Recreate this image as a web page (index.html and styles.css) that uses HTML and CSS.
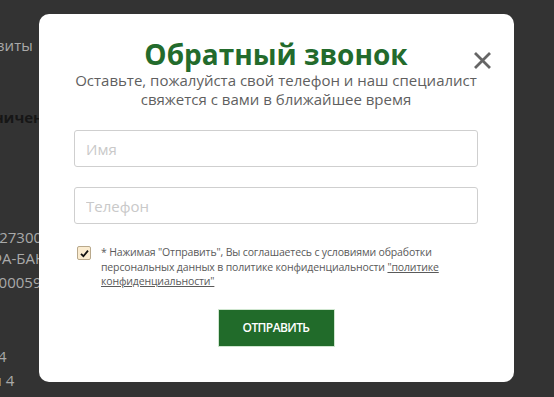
FILE: index.html
```html
<!DOCTYPE html>
<html lang="ru">
<head>
<meta charset="utf-8">
<link rel="stylesheet" href="styles.css">
</head>
<body>
<div class="page">
  <div class="bg-line l1">Реквизиты</div>
  <div class="bg-line l2 bold">Ограничен</div>
  <div class="bg-line l3">4027300</div>
  <div class="bg-line l4">ЛЬФА-БАНК</div>
  <div class="bg-line l5">2000593</div>
  <div class="bg-line l6">4</div>
  <div class="bg-line l7">ı 4</div>
</div>
<div class="overlay">
  <div class="modal">
    <button class="close" aria-label="Закрыть">
      <svg width="19" height="19" viewBox="0 0 19 19"><path d="M2 2 L17 17 M17 2 L2 17" stroke="#666" stroke-width="2.8" stroke-linecap="butt" fill="none"/></svg>
    </button>
    <h1 class="title">Обратный звонок</h1>
    <p class="subtitle">Оставьте, пожалуйста свой телефон и наш специалист<br>свяжется с вами в ближайшее время</p>
    <input class="field" type="text" placeholder="Имя">
    <input class="field" type="text" placeholder="Телефон">
    <div class="agree">
      <span class="check"><svg width="11" height="11" viewBox="0 0 11 11"><path d="M2 5.8 L4.4 8.2 L9 2.6" stroke="#111" stroke-width="1.8" fill="none"/></svg></span>
      <p class="agree-text">* Нажимая "Отправить", Вы соглашаетесь с условиями обработки персональных данных в политике конфиденциальности <a href="#">"политике конфиденциальности"</a></p>
    </div>
    <div class="actions"><button class="submit">ОТПРАВИТЬ</button></div>
  </div>
</div>
</body>
</html>
```
FILE: styles.css
```css
* { box-sizing: border-box; }
html, body { margin: 0; padding: 0; }
body {
  width: 554px;
  height: 397px;
  overflow: hidden;
  background: #333333;
  font-family: "Open Sans", "Noto Sans", sans-serif;
}
.page {
  padding-top: 34px;
  display: flex;
  flex-direction: column;
  color: #a9a9a9;
  font-size: 15px;
  line-height: 23px;
}
.bg-line { white-space: nowrap; }
.bold { font-weight: 700; color: #161616; }
.l1 { margin-left: -46px; }
.l2 { margin-left: -44px; margin-top: 49px; }
.l3 { margin-left: -18px; margin-top: 97px; }
.l4 { margin-left: -30px; margin-top: -2px; }
.l5 { margin-left: -10px; margin-top: 1px; }
.l6 { margin-left: -2px; margin-top: 51px; }
.l7 { margin-left: -2px; margin-top: 1px; }

.overlay {
  position: fixed;
  inset: 0;
}
.modal {
  position: absolute;
  left: 39px;
  top: 14px;
  width: 475px;
  height: 368px;
  background: #fff;
  border-radius: 10px;
  padding: 23px 36px 0 35px;
  display: flex;
  flex-direction: column;
}
.close {
  position: absolute;
  top: 37px;
  right: 22px;
  width: 19px;
  height: 19px;
  padding: 0;
  border: 0;
  background: none;
  display: block;
}
.close svg { display: block; }
.title {
  margin: 0;
  text-align: center;
  font-size: 28px;
  line-height: 34px;
  font-weight: 700;
  color: #236b2c;
}
.subtitle {
  margin: 0;
  text-align: center;
  font-size: 15px;
  line-height: 19px;
  color: #5f5f5f;
}
.field {
  display: block;
  width: 404px;
  height: 37px;
  margin-top: 21px;
  border: 1px solid #cfcfcf;
  border-radius: 3px;
  padding: 0 11px;
  font-family: inherit;
  font-size: 15px;
  color: #333;
  outline: none;
}
.field + .field { margin-top: 20px; }
.field::placeholder { color: #c9c9c9; }
.agree {
  display: flex;
  gap: 10px;
  margin-top: 21px;
  padding-left: 3px;
}
.check {
  flex: none;
  width: 14px;
  height: 14px;
  margin-top: 1px;
  border: 1px solid #b9a98c;
  border-radius: 2px;
  background: #fbecd0;
  display: flex;
  align-items: center;
  justify-content: center;
}
.check svg { display: block; }
.agree-text {
  margin: 0;
  max-width: 352px;
  font-size: 10.5px;
  letter-spacing: -0.15px;
  line-height: 14.5px;
  color: #5a5a5a;
}
.agree-text a { color: #5a5a5a; text-decoration: underline; }
.actions {
  display: flex;
  justify-content: center;
  margin-top: 20px;
}
.submit {
  width: 117px;
  height: 38px;
  border: 1px solid #cfe6cf;
  background: #216b2a;
  color: #fff;
  font-family: inherit;
  font-size: 12px;
  font-weight: 600;
  letter-spacing: -0.6px;
  padding: 0;
}
```
